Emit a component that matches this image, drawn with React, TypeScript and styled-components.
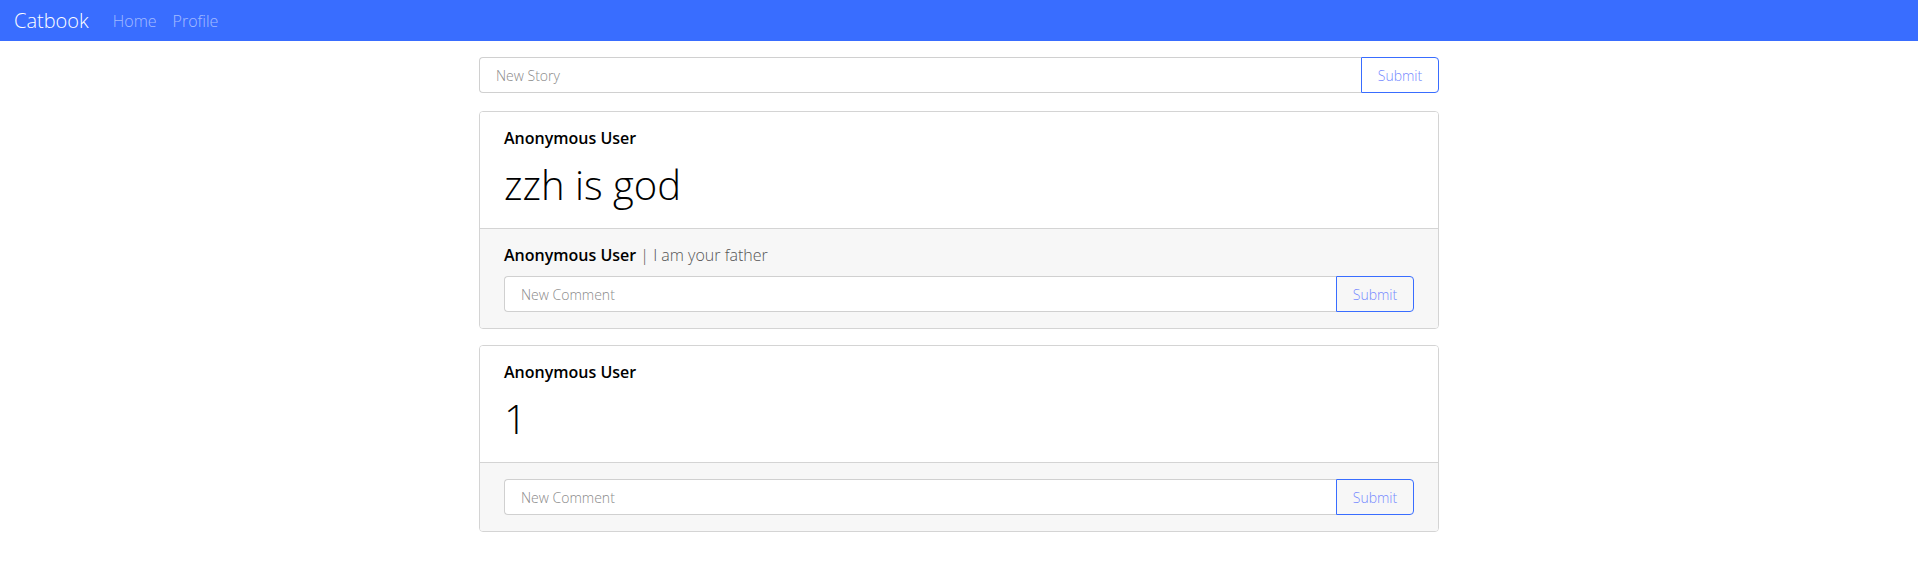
import React from "react";
import styled, { createGlobalStyle } from "styled-components";

const GlobalStyle = createGlobalStyle`
  html, body { margin: 0; padding: 0; background: #fff; }
  body {
    font-family: "Open Sans", "Noto Sans", sans-serif;
    font-weight: 300;
    color: #111;
  }
  * { box-sizing: border-box; }
`;

const NavBar = styled.nav`
  height: 41px;
  background: #396dff;
  display: flex;
  align-items: center;
  padding: 0 14px;
`;

const Brand = styled.span`
  font-size: 20px;
  font-weight: 300;
  color: #fff;
  margin-right: 24px;
`;

const NavLinks = styled.div`
  display: flex;
  gap: 16px;
`;

const NavLink = styled.a`
  font-size: 16px;
  font-weight: 300;
  color: rgba(255, 255, 255, 0.55);
  text-decoration: none;
`;

const Container = styled.main`
  width: 960px;
  margin: 16px auto 0;
  display: flex;
  flex-direction: column;
`;

const InputRow = styled.form`
  display: flex;
  height: 36px;
`;

const TextInput = styled.input`
  flex: 1;
  height: 100%;
  border: 1px solid #d0d0d0;
  border-right: none;
  border-radius: 4px 0 0 4px;
  padding: 0 16px;
  font-family: inherit;
  font-size: 14px;
  font-weight: 300;
  background: #fff;
  outline: none;
  &::placeholder { color: #8a8a8a; }
`;

const SubmitButton = styled.button`
  width: 78px;
  height: 100%;
  border: 1px solid #396dff;
  border-radius: 0 4px 4px 0;
  background: transparent;
  color: #7488ff;
  font-family: inherit;
  font-size: 14px;
  font-weight: 300;
  padding: 0;
`;

const Card = styled.section<{ $first?: boolean }>`
  margin-top: ${(p) => (p.$first ? 18 : 16)}px;
  border: 1px solid #d4d4d4;
  border-radius: 4px;
  overflow: hidden;
`;

const CardBody = styled.div`
  padding: 14px 24px 19px;
  background: #fff;
`;

const Author = styled.div`
  font-size: 16px;
  font-weight: 600;
  line-height: 24px;
  color: #000;
`;

const StoryText = styled.div`
  margin-top: 11px;
  font-size: 40px;
  font-weight: 300;
  line-height: 48px;
  color: #000;
`;

const CardFooter = styled.div`
  border-top: 1px solid #d4d4d4;
  background: #f7f7f7;
  padding: 16px 24px 16px;
  display: flex;
  flex-direction: column;
  gap: 9px;
`;

const Comment = styled.div`
  font-size: 16px;
  line-height: 24px;
  margin-top: -2px;
`;

const CommentAuthor = styled.span`
  font-weight: 600;
  color: #000;
`;

const CommentText = styled.span`
  font-weight: 300;
  color: #555;
`;

type Story = { author: string; text: string; comments: { author: string; text: string }[] };

const stories: Story[] = [
  { author: "Anonymous User", text: "zzh is god", comments: [{ author: "Anonymous User", text: "I am your father" }] },
  { author: "Anonymous User", text: "1", comments: [] },
];

export default function App() {
  return (
    <>
      <GlobalStyle />
      <NavBar>
        <Brand>Catbook</Brand>
        <NavLinks>
          <NavLink href="#">Home</NavLink>
          <NavLink href="#">Profile</NavLink>
        </NavLinks>
      </NavBar>
      <Container>
        <InputRow onSubmit={(e) => e.preventDefault()}>
          <TextInput placeholder="New Story" />
          <SubmitButton type="submit">Submit</SubmitButton>
        </InputRow>
        {stories.map((s, i) => (
          <Card key={i} $first={i === 0}>
            <CardBody>
              <Author>{s.author}</Author>
              <StoryText>{s.text}</StoryText>
            </CardBody>
            <CardFooter>
              {s.comments.map((c, j) => (
                <Comment key={j}>
                  <CommentAuthor>{c.author}</CommentAuthor>
                  <CommentText> | {c.text}</CommentText>
                </Comment>
              ))}
              <InputRow onSubmit={(e) => e.preventDefault()}>
                <TextInput placeholder="New Comment" />
                <SubmitButton type="submit">Submit</SubmitButton>
              </InputRow>
            </CardFooter>
          </Card>
        ))}
      </Container>
    </>
  );
}
